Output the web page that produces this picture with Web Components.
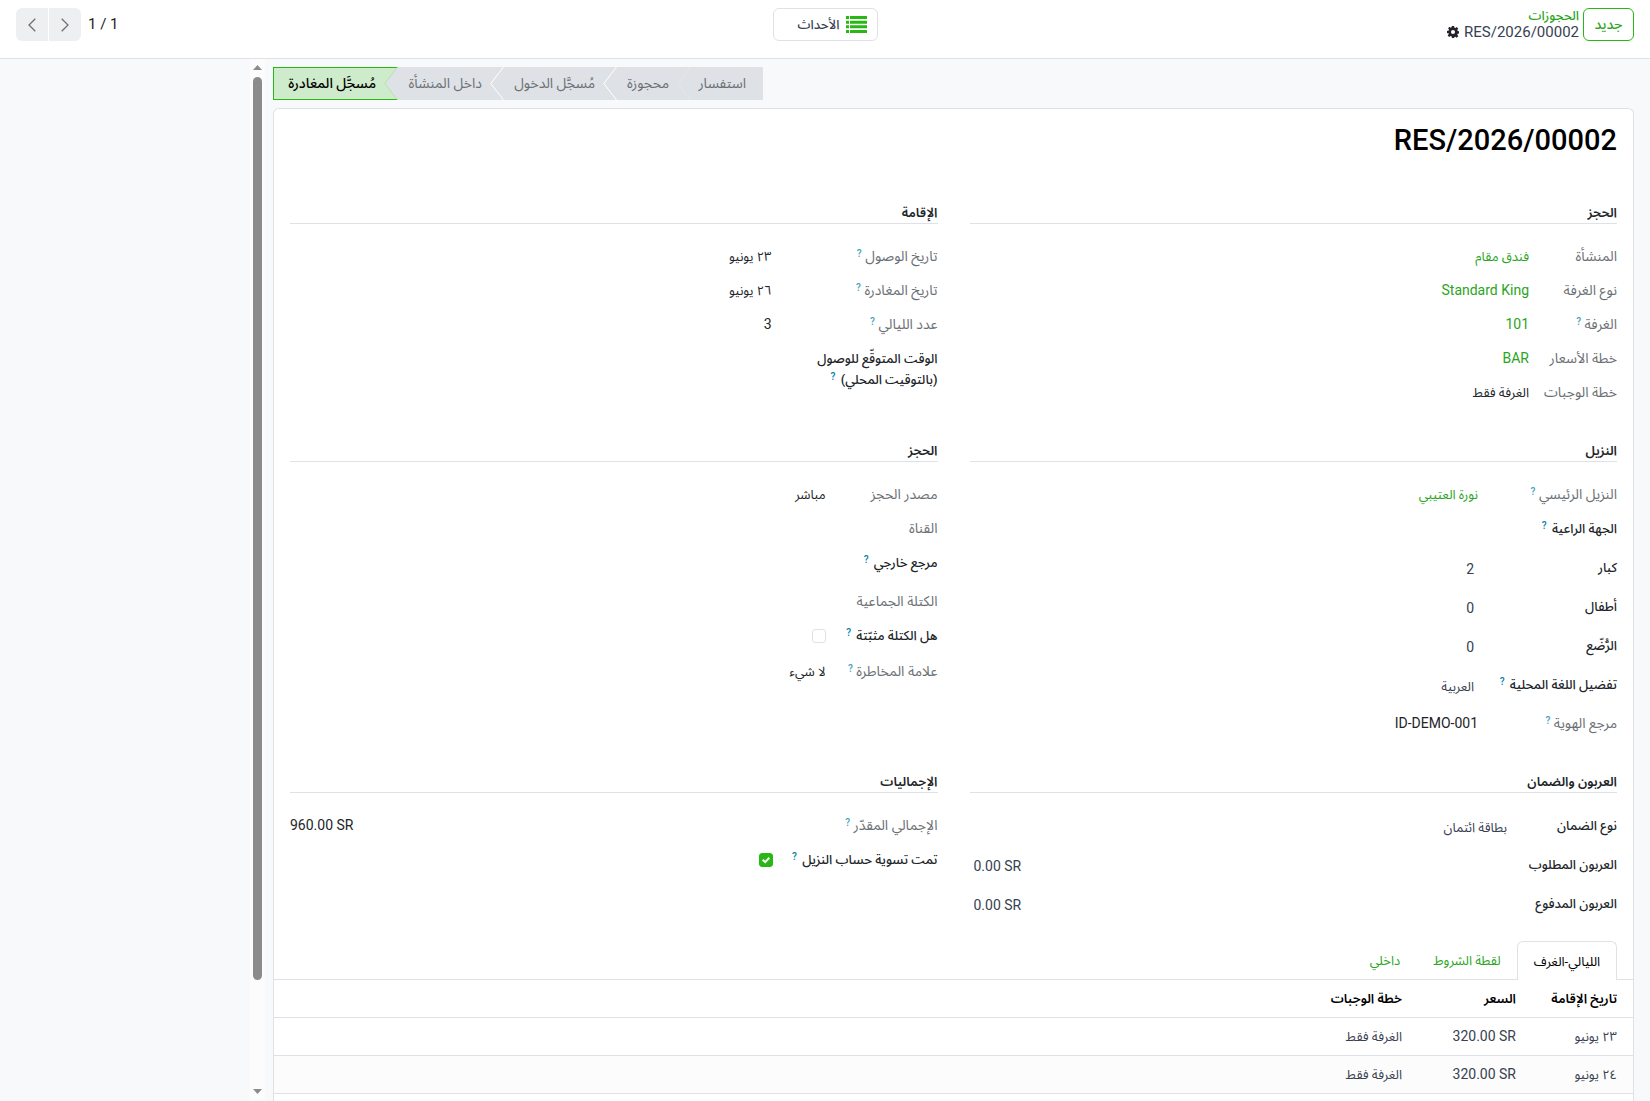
<!DOCTYPE html>
<html lang="ar" dir="rtl">
<head>
<meta charset="utf-8">
<title>RES/2026/00002</title>
<style>
  :root {
    --green: #28b714;
    --green-text: #2aa51c;
    --line: #dee2e6;
    --ink: #212529;
    --muted: #6c7075;
    --canvas: #f8f9fb;
    --help: #0180a5;
  }
  html, body { margin: 0; height: 100%; }
  body {
    font-family: Roboto, "Noto Sans Arabic", "DejaVu Sans", sans-serif;
    font-size: 14px;
    line-height: 21px;
    color: var(--ink);
    background: var(--canvas);
  }
</style>
</head>
<body>
<reservation-page></reservation-page>

<script>
const define = (name, html, setup) => {
  const template = document.createElement('template');
  template.innerHTML = '<style>*{box-sizing:border-box}a{text-decoration:none;color:var(--green-text)}</style>' + html;
  customElements.define(name, class extends HTMLElement {
    connectedCallback() {
      if (this.shadowRoot) return;
      const root = this.attachShadow({ mode: 'open' });
      root.append(template.content.cloneNode(true));
      if (setup) setup(this, root);
    }
  });
};

define('action-bar', `
<style>
  :host { display: grid; grid-template-columns: 1fr auto 1fr; align-items: start; height: 59px; flex: none;
    padding: 8px 16px 0; box-sizing: border-box; background: #fff; border-bottom: 1px solid var(--line); }
  button { font: inherit; height: 33px; cursor: pointer; background: #fff; padding: 0; }
  .start, .end { display: flex; align-items: flex-start; gap: 4px; }
  .end { justify-content: flex-end; align-items: center; gap: 7px; }
  .new { width: 51px; border: 1px solid var(--green); border-radius: 6px; color: var(--green-text); font-weight: 500; }
  .crumbs { display: flex; flex-direction: column; }
  .crumbs a { line-height: 16px; font-size: 13px; font-weight: 500; }
  .here { display: flex; align-items: center; gap: 4px; line-height: 16px; font-size: 15px; color: #374151; }
  .here button { border: 0; width: 14px; height: 16px; display: grid; place-items: center; }
  .events { width: 105px; display: flex; align-items: center; gap: 6px; padding: 0 10px; border: 1px solid var(--line);
    border-radius: 6px; color: #374151; font-size: 13px; font-weight: 500; }
  .pager { display: flex; gap: 1px; direction: ltr; }
  .pager button { width: 32px; border: 0; background: #eeeff1; display: grid; place-items: center; }
  .pager button:first-child { border-radius: 6px 0 0 6px; }
  .pager button:last-child { border-radius: 0 6px 6px 0; }
  .count { font-size: 15px; }
</style>
<div class="start">
  <button class="new" type="button">جديد</button>
  <div class="crumbs">
    <a href="#">الحجوزات</a>
    <div class="here"><bdi dir="ltr">RES/2026/00002</bdi>
      <button type="button" aria-label="إجراءات">
        <svg width="12" height="12" viewBox="0 0 16 16"><path fill="#212529" fill-rule="evenodd" d="M6.500 0h3l.4 2.300 1.200.5 1.900-1.400 2.100 2.100-1.400 1.900.5 1.200 2.300.4v3l-2.300.4-.5 1.200 1.400 1.900-2.100 2.100-1.900-1.400-1.200.5L9.500 16h-3l-.4-2.300-1.200-.5L3 14.600.9 12.500l1.400-1.900-.5-1.200L0 9.500v-3l2.300-.4.5-1.200L1.400 3 3.500.9l1.400 1.400 1.200-.5zM8 5.300a2.700 2.700 0 1 0 0 5.400 2.700 2.700 0 0 0 0-5.400z"/></svg>
      </button>
    </div>
  </div>
</div>
<button class="events" type="button">
  <svg width="21" height="17" viewBox="0 0 21 17" fill="#28b714"><path d="M4 0h17v3H4zM0 0h3v3H0zM4 4.700h17v3H4zM0 4.700h3v3H0zM4 9.300h17v3H4zM0 9.300h3v3H0zM4 14h17v3H4zM0 14h3v3H0z"/></svg>
  <span>الأحداث</span>
</button>
<div class="end">
  <bdi class="count" dir="ltr">1 / 1</bdi>
  <div class="pager">
    <button type="button" aria-label="السابق"><svg width="8" height="14" viewBox="0 0 8 14" fill="none" stroke="#6c7075" stroke-width="1.300"><path d="M7.300.700 1 7l6.300 6.300"/></svg></button>
    <button type="button" aria-label="التالي"><svg width="8" height="14" viewBox="0 0 8 14" fill="none" stroke="#6c7075" stroke-width="1.300"><path d="M.7.700 7 7 .7 13.300"/></svg></button>
  </div>
</div>`);

define('scroll-rail', `
<style>
  :host { display: flex; flex-direction: column; align-items: center; width: 15px; flex: none; background: #fcfcfc; padding: 6px 0 7px; box-sizing: border-box; }
  .thumb { width: 9px; height: 903px; margin-top: 7px; border-radius: 5px; background: #8b8b8b; }
  .down { margin-top: auto; }
  svg { display: block; flex: none; }
</style>
<svg width="9" height="5" viewBox="0 0 9 5"><path fill="#8b8b8b" d="M4.500 0 9 5H0z"/></svg>
<div class="thumb"></div>
<svg class="down" width="9" height="5" viewBox="0 0 9 5"><path fill="#8b8b8b" d="M0 0h9L4.500 5z"/></svg>`);

define('status-step', `
<style>
  :host { display: block; width: var(--w); }
  button { position: relative; width: 100%; height: 33px; font: inherit; font-size: 14px; border: 0; padding: 0 22px 0 9px;
    background: #dee2e6; color: var(--muted); white-space: nowrap; text-align: start; }
  :host([first]) button { padding-right: 17px; }
  :host([current]) button { background: #ceebcb; color: #000; border: 1px solid var(--green); border-right: 0; font-weight: 500; }
  svg { position: absolute; z-index: 1; top: 0; right: 100%; display: block; }
  :host([current]) svg { display: none; }
</style>
<button type="button"><slot></slot><svg width="14" height="33" viewBox="0 0 14 33"><path d="M14 0 1 16.500 14 33z" fill="#dee2e6"/><path class="edge" d="M13.500 0 .8 16.500 13.500 33" fill="none"/></svg></button>`,
(el, root) => {
  root.querySelector('.edge').setAttribute('stroke', el.getAttribute('edge') || 'none');
});

define('status-bar', `
<style>:host { display: flex; width: fit-content; margin-right: auto; }</style>
<slot></slot>`);

define('form-field', `
<style>
  :host { display: grid; grid-template-columns: var(--label) 1fr; padding: 6px 0 7px; min-height: 34px; box-sizing: border-box; }
  :host([edit]) { min-height: 39px; }
  :host([tick]) { min-height: var(--tick, 34px); }
  .label { color: var(--muted); font-size: 14px; }
  :host([edit]) .label, :host([tick]) .label { color: var(--ink); font-weight: 500; font-size: 13px; }
  sup { color: var(--help); opacity: .75; font-size: 10px; line-height: 0; vertical-align: 4px; font-weight: 500; }
  :host([edit]) sup, :host([tick]) sup { opacity: 1; margin-right: 2px; }
  .value { font-size: 13px; display: block; }
  .latin { font-size: 14px; }
  .value.far { text-align: left; }
  input, select { font: inherit; font-size: 14px; color: #374151; background: none; border: 0; outline: 0; appearance: none; margin: 0; padding: 0 4px; height: 23px; width: 100%; min-width: 0; }
  select { font-size: 13px; height: 25px; }
  .box { position: relative; width: 14px; padding: 4px 0 3px; }
  .box input { display: block; width: 14px; height: 14px; padding: 0; border: 1px solid var(--line); border-radius: 3px; background: #fff; }
  .box input:checked { border-color: var(--green); background: var(--green); }
  .box svg { position: absolute; left: 3px; top: 7px; display: none; }
  input:checked + svg { display: block; }
</style>
<label class="label" for="control"></label>
<div class="cell"></div>`,
(el, root) => {
  const label = root.querySelector('.label');
  label.textContent = el.getAttribute('label');
  if (el.hasAttribute('help')) {
    const sup = document.createElement('sup');
    sup.textContent = '?';
    label.append(' ', sup);
  }
  const cell = root.querySelector('.cell');
  const value = el.getAttribute('value') || '';
  const latin = !/[\u0600-\u06ff]/.test(value);
  if (el.hasAttribute('tick')) {
    cell.innerHTML = '<div class="box"><input id="control" type="checkbox"><svg width="8" height="8" viewBox="0 0 8 8" fill="none" stroke="#fff" stroke-width="2"><path d="M.7 3.800 3.200 6.200 7.300 1.800"/></svg></div>';
    cell.querySelector('input').checked = el.getAttribute('tick') === 'on';
  } else if (el.getAttribute('edit') === 'select') {
    cell.innerHTML = '<select id="control"><option></option></select>';
    cell.querySelector('option').textContent = value;
  } else if (el.hasAttribute('edit')) {
    cell.innerHTML = '<input id="control" type="text">';
    const input = cell.querySelector('input');
    input.value = value;
    if (el.hasAttribute('money')) input.dir = 'ltr';
  } else {
    const out = document.createElement(el.hasAttribute('link') ? 'a' : 'output');
    if (el.hasAttribute('link')) out.href = '#';
    out.id = 'control';
    out.className = 'value' + (latin ? ' latin' : '') + (el.hasAttribute('money') ? ' far' : '');
    const bdi = document.createElement('bdi');
    if (latin) bdi.dir = 'ltr';
    bdi.textContent = value;
    out.append(bdi);
    cell.append(out);
  }
});

define('field-group', `
<style>
  :host { display: block; }
  h2 { margin: 0 0 16px; font-size: 13px; line-height: 21px; font-weight: 600; border-bottom: 1px solid var(--line); }
</style>
<h2></h2><slot></slot>`,
(el, root) => { root.querySelector('h2').textContent = el.getAttribute('heading'); });

define('note-book', `
<style>
  :host { display: block; margin: 15px -16px 0; }
  .tabs { display: flex; padding: 0 16px; border-bottom: 1px solid var(--line); }
  .tabs button { font: inherit; font-size: 13px; height: 38px; border: 1px solid transparent; border-bottom: 0; padding: 0 15px; background: none;
    color: var(--green-text); min-width: 64px; }
  .tabs button.on { color: #000; background: #fff; border-color: var(--line); border-radius: 6px 6px 0 0; height: 39px; margin-bottom: -1px; }
  .tabs .w { min-width: 100px; }
  table { width: 100%; border-collapse: separate; border-spacing: 0; table-layout: fixed; font-size: 13px; }
  th, td { height: 38px; padding: 0 8px; text-align: start; border-bottom: 1px solid var(--line); white-space: nowrap; }
  th { font-weight: 600; color: #000; }
  td { color: #374151; }
  th:first-child, td:first-child { padding-right: 16px; }
  tbody tr:nth-child(even) { background: #fcfcfc; }
  .d { width: 109px; } .p { width: 114px; }
  bdi { font-size: 14px; }
</style>
<div class="tabs" role="tablist">
  <button type="button" role="tab" class="on w">الليالي-الغرف</button>
  <button type="button" role="tab" class="w">لقطة الشروط</button>
  <button type="button" role="tab">داخلي</button>
</div>
<table>
  <thead><tr><th class="d">تاريخ الإقامة</th><th class="p">السعر</th><th>خطة الوجبات</th></tr></thead>
  <tbody>
    <tr><td>٢٣ يونيو</td><td><bdi dir="ltr">320.00 SR</bdi></td><td>الغرفة فقط</td></tr>
    <tr><td>٢٤ يونيو</td><td><bdi dir="ltr">320.00 SR</bdi></td><td>الغرفة فقط</td></tr>
  </tbody>
</table>`);

define('form-sheet', `
<style>
  :host { display: block; flex: 1; padding: 16px 16px 0; background: #fff; border: 1px solid var(--line); border-bottom: 0; border-radius: 6px 6px 0 0; box-sizing: border-box; }
  h1 { margin: 0 0 46px; font-size: 29px; line-height: 31px; font-weight: 500; color: #000; }
  .groups { display: grid; grid-template-columns: 1fr 1fr; gap: 30px 32px; }
</style>
<h1><bdi dir="ltr"><slot name="title"></slot></bdi></h1>
<div class="groups"><slot></slot></div>
<slot name="notebook"></slot>`);

define('reservation-page', `
<style>
  :host { display: flex; flex-direction: column; height: 100vh; overflow: hidden; }
  .body { display: flex; flex: 1; min-height: 0; }
  main { flex: 1; min-width: 0; display: flex; flex-direction: column; padding: 8px 16px 0 8px; gap: 8px; }
  aside { width: 250px; flex: none; }
</style>
<action-bar></action-bar>
<div class="body">
  <main>
    <status-bar>
      <status-step first edge="#e5e8eb" style="--w:72px">استفسار</status-step>
      <status-step edge="#fff" style="--w:74px">محجوزة</status-step>
      <status-step edge="#fff" style="--w:113px">مُسجَّل الدخول</status-step>
      <status-step edge="#b5e2b0" style="--w:106px">داخل المنشأة</status-step>
      <status-step current style="--w:125px">مُسجَّل المغادرة</status-step>
    </status-bar>
    <form-sheet>
      <span slot="title">RES/2026/00002</span>
      <field-group heading="الحجز" style="--label:88px">
        <form-field label="المنشأة" value="فندق مقام" link></form-field>
        <form-field label="نوع الغرفة" value="Standard King" link></form-field>
        <form-field label="الغرفة" help value="101" link></form-field>
        <form-field label="خطة الأسعار" value="BAR" link></form-field>
        <form-field label="خطة الوجبات" value="الغرفة فقط"></form-field>
      </field-group>
      <field-group heading="الإقامة" style="--label:166px">
        <form-field label="تاريخ الوصول" help value="٢٣ يونيو"></form-field>
        <form-field label="تاريخ المغادرة" help value="٢٦ يونيو"></form-field>
        <form-field label="عدد الليالي" help value="3"></form-field>
        <form-field label="الوقت المتوقّع للوصول (بالتوقيت المحلي)" help edit></form-field>
      </field-group>
      <field-group heading="النزيل" style="--label:139px">
        <form-field label="النزيل الرئيسي" help value="نورة العتيبي" link></form-field>
        <form-field label="الجهة الراعية" help edit></form-field>
        <form-field label="كبار" value="2" edit></form-field>
        <form-field label="أطفال" value="0" edit></form-field>
        <form-field label="الرُّضّع" value="0" edit></form-field>
        <form-field label="تفضيل اللغة المحلية" help value="العربية" edit="select"></form-field>
        <form-field label="مرجع الهوية" help value="ID-DEMO-001"></form-field>
      </field-group>
      <field-group heading="الحجز" style="--label:112px;--tick:36px">
        <form-field label="مصدر الحجز" value="مباشر"></form-field>
        <form-field label="القناة"></form-field>
        <form-field label="مرجع خارجي" help edit></form-field>
        <form-field label="الكتلة الجماعية"></form-field>
        <form-field label="هل الكتلة مثبّتة" help tick="off"></form-field>
        <form-field label="علامة المخاطرة" help value="لا شيء"></form-field>
      </field-group>
      <field-group heading="العربون والضمان" style="--label:106px">
        <form-field label="نوع الضمان" value="بطاقة ائتمان" edit="select"></form-field>
        <form-field label="العربون المطلوب" value="0.00 SR" edit money></form-field>
        <form-field label="العربون المدفوع" value="0.00 SR" edit money></form-field>
      </field-group>
      <field-group heading="الإجماليات" style="--label:165px">
        <form-field label="الإجمالي المقدّر" help value="960.00 SR" money></form-field>
        <form-field label="تمت تسوية حساب النزيل" help tick="on"></form-field>
      </field-group>
      <note-book slot="notebook"></note-book>
    </form-sheet>
  </main>
  <scroll-rail></scroll-rail>
  <aside></aside>
</div>`);
</script>
</body>
</html>
